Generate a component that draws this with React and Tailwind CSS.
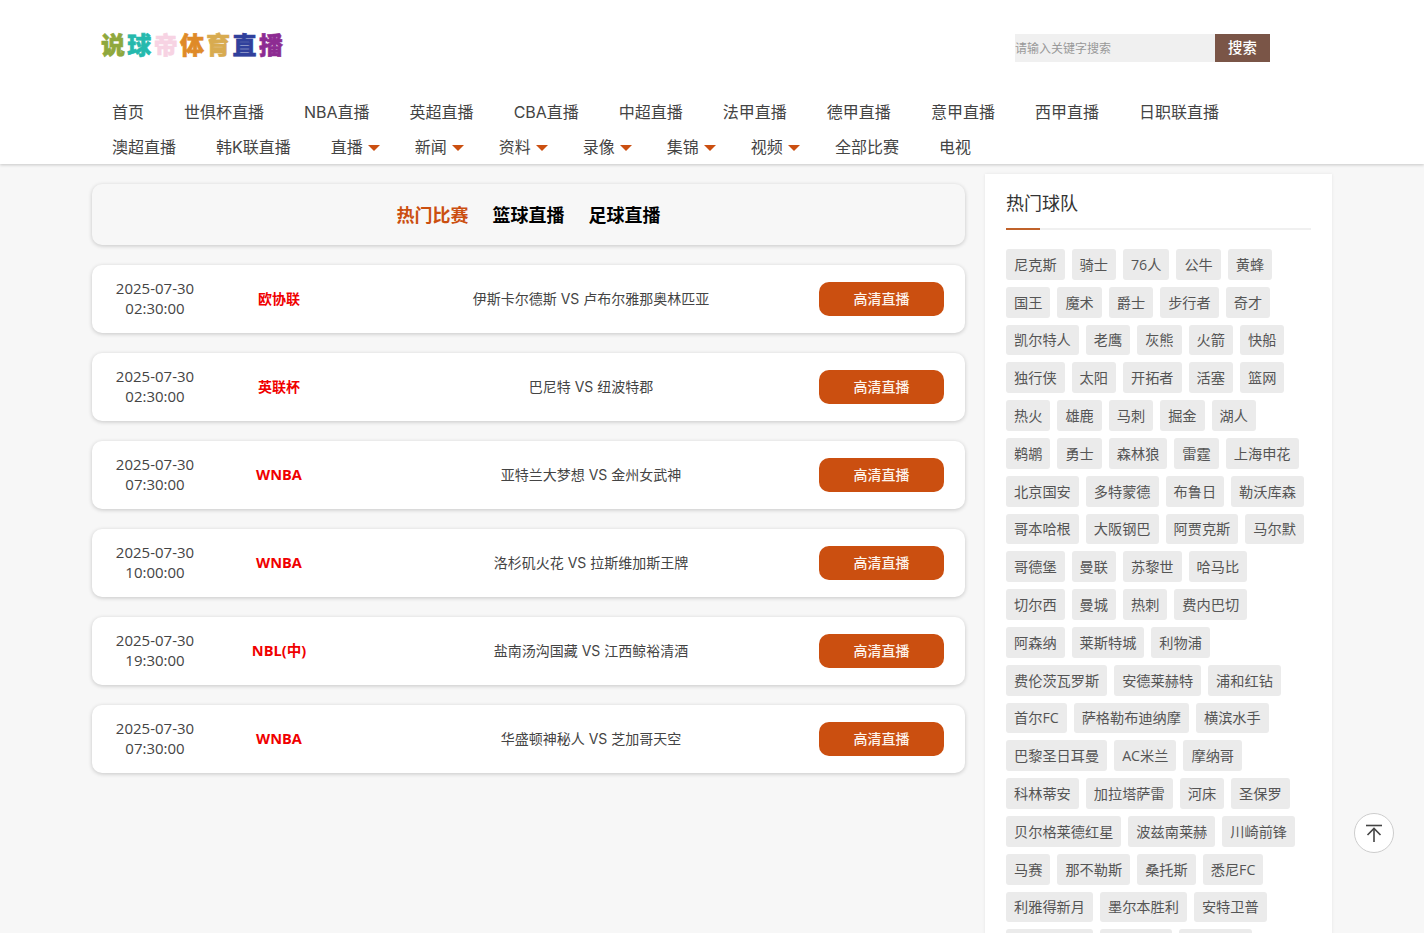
import React from 'react';

const FONT = 'font-["Open_Sans","Noto_Sans_CJK_SC",sans-serif]';

const logoChars = [
  { c: '说', cls: 'text-[#8fa83d]' },
  { c: '球', cls: 'text-[#25b9ad]' },
  { c: '帝', cls: 'text-[#f7d3e3]' },
  { c: '体', cls: 'text-[#df8a28]' },
  { c: '育', cls: 'text-[#d8ab50]' },
  { c: '直', cls: 'text-[#30409c]' },
  { c: '播', cls: 'text-[#8d2b92]' },
];

const navItems = [
  { name: '首页' },
  { name: '世俱杯直播' },
  { name: 'NBA直播' },
  { name: '英超直播' },
  { name: 'CBA直播' },
  { name: '中超直播' },
  { name: '法甲直播' },
  { name: '德甲直播' },
  { name: '意甲直播' },
  { name: '西甲直播' },
  { name: '日职联直播' },
  { name: '澳超直播' },
  { name: '韩K联直播' },
  { name: '直播', caret: true },
  { name: '新闻', caret: true },
  { name: '资料', caret: true },
  { name: '录像', caret: true },
  { name: '集锦', caret: true },
  { name: '视频', caret: true },
  { name: '全部比赛' },
  { name: '电视' },
];

const matches = [
  { date: '2025-07-30', time: '02:30:00', league: '欧协联', small: true, teams: '伊斯卡尔德斯 VS 卢布尔雅那奥林匹亚' },
  { date: '2025-07-30', time: '02:30:00', league: '英联杯', small: true, teams: '巴尼特 VS 纽波特郡' },
  { date: '2025-07-30', time: '07:30:00', league: 'WNBA', teams: '亚特兰大梦想 VS 金州女武神' },
  { date: '2025-07-30', time: '10:00:00', league: 'WNBA', teams: '洛杉矶火花 VS 拉斯维加斯王牌' },
  { date: '2025-07-30', time: '19:30:00', league: 'NBL(中)', teams: '盐南汤沟国藏 VS 江西鲸裕清酒' },
  { date: '2025-07-30', time: '07:30:00', league: 'WNBA', teams: '华盛顿神秘人 VS 芝加哥天空' },
];

const teams = [
  '尼克斯', '骑士', '76人', '公牛', '黄蜂',
  '国王', '魔术', '爵士', '步行者', '奇才',
  '凯尔特人', '老鹰', '灰熊', '火箭', '快船',
  '独行侠', '太阳', '开拓者', '活塞', '篮网',
  '热火', '雄鹿', '马刺', '掘金', '湖人',
  '鹈鹕', '勇士', '森林狼', '雷霆', '上海申花',
  '北京国安', '多特蒙德', '布鲁日', '勒沃库森',
  '哥本哈根', '大阪钢巴', '阿贾克斯', '马尔默',
  '哥德堡', '曼联', '苏黎世', '哈马比',
  '切尔西', '曼城', '热刺', '费内巴切',
  '阿森纳', '莱斯特城', '利物浦',
  '费伦茨瓦罗斯', '安德莱赫特', '浦和红钻',
  '首尔FC', '萨格勒布迪纳摩', '横滨水手',
  '巴黎圣日耳曼', 'AC米兰', '摩纳哥',
  '科林蒂安', '加拉塔萨雷', '河床', '圣保罗',
  '贝尔格莱德红星', '波兹南莱赫', '川崎前锋',
  '马赛', '那不勒斯', '桑托斯', '悉尼FC',
  '利雅得新月', '墨尔本胜利', '安特卫普',
];

const MatchRow = ({ match }) => (
  <div className="grid grid-cols-[126px_122px_1fr_146px] items-center h-[68px] bg-white rounded-[10px] shadow-[0_1px_4px_rgba(0,0,0,0.2)]">
    <div className="-mt-[2px] text-center text-[15px] leading-5 text-[#444]">
      <div>{match.date}</div>
      <div>{match.time}</div>
    </div>
    <div className={`text-center font-bold text-[#f00000] ${match.small ? 'text-sm' : 'text-[14.6px]'}`}>{match.league}</div>
    <div className='pl-[23px] text-center text-sm text-[#444] font-["Inter","Noto_Sans_CJK_SC",sans-serif]'>{match.teams}</div>
    <div>
      <a className="flex items-center justify-center w-[125px] h-[34px] rounded-[10px] bg-[#cb4f10] text-sm font-medium text-[#fdf3ea]">高清直播</a>
    </div>
  </div>
);

const App = () => {
  return (
    <div className={`h-screen overflow-hidden bg-[#f7f7f7] ${FONT}`}>
      {/* Header */}
      <header className="bg-white h-[164px] shadow-[0_1px_3px_rgba(0,0,0,0.2)] relative">
        <div className="w-[1240px] mx-auto">
          <div className="flex items-center justify-between h-[94px] pl-[9px] pr-[62px]">
            <div className="flex -mt-[4px] text-[24px] leading-[26px] tracking-[2.3px] font-black [-webkit-text-stroke:0.6px_currentColor]">
              {logoChars.map((item) => (
                <span key={item.c} className={item.cls}>{item.c}</span>
              ))}
            </div>
            <div className="flex h-7 mt-[2px]">
              <input
                type="text"
                placeholder="请输入关键字搜索"
                className="w-[200px] pt-[2px] bg-[#f0f0f0] text-xs outline-none placeholder:text-[#999]"
              />
              <button className="w-[55px] bg-[#7a5547] text-[14.4px] font-medium text-white">搜索</button>
            </div>
          </div>
          <nav className='flex flex-wrap font-["Inter","Noto_Sans_CJK_SC",sans-serif]'>
            {navItems.map((item) => (
              <a key={item.name} className="flex items-center h-[35px] px-5 text-base text-[#444]">
                {item.name}
                {item.caret && (
                  <span className="ml-[5px] -mr-[5px] mt-[3px] w-0 h-0 border-x-[6px] border-x-transparent border-t-[6px] border-t-[#cb4f10]"></span>
                )}
              </a>
            ))}
          </nav>
        </div>
      </header>

      <main className="w-[1240px] mx-auto flex gap-5 items-start">
        {/* Matches */}
        <div className="w-[873px] mt-5 flex flex-col gap-5">
          <div className="flex items-center justify-center gap-6 h-[61px] rounded-[10px] bg-[#f7f7f7] shadow-[0_1px_4px_rgba(0,0,0,0.2)] text-lg font-bold text-black">
            <span className="text-[#cb4f10]">热门比赛</span>
            <span>篮球直播</span>
            <span>足球直播</span>
          </div>
          {matches.map((match, index) => (
            <MatchRow key={index} match={match} />
          ))}
        </div>

        {/* Hot teams */}
        <aside className="w-[347px] mt-[10px] bg-white shadow-[0_0_3px_rgba(0,0,0,0.08)] pl-[21px] pr-[21px] pt-[17px]">
          <div className="text-lg leading-[25px] pb-3 text-[#333]">热门球队</div>
          <div className="flex h-[2px]">
            <div className="w-[34px] bg-[#c0622a]"></div>
            <div className="flex-1 bg-[#f0f0f0]"></div>
          </div>
          <div className="flex flex-wrap gap-x-[7px] gap-y-[7px] mt-[19px] mr-[4px]">
            {teams.map((team) => (
              <a key={team} className="flex items-center h-[30.8px] px-2 rounded-[3px] bg-[#ebebeb] text-[14.2px] text-[#555]">{team}</a>
            ))}
            {/* next row is cut off by the window, only the tops of the tags show */}
            <a className="w-[87px] h-[30.8px] rounded-[3px] bg-[#ebebeb]"></a>
            <a className="w-[72px] h-[30.8px] rounded-[3px] bg-[#ebebeb]"></a>
            <a className="w-[73px] h-[30.8px] rounded-[3px] bg-[#ebebeb]"></a>
          </div>
        </aside>
      </main>

      {/* Back to top */}
      <button className="fixed left-[1354px] top-[813px] flex items-center justify-center w-10 h-10 rounded-full bg-white border border-[#ccc]">
        <svg width="20" height="20" viewBox="0 0 20 20" fill="none" stroke="#444" strokeWidth="1.6">
          <path d="M2 2.5h16" />
          <path d="M10 19V6" />
          <path d="M3.5 12L10 5.5 16.5 12" />
        </svg>
      </button>
    </div>
  );
};

export default App;
